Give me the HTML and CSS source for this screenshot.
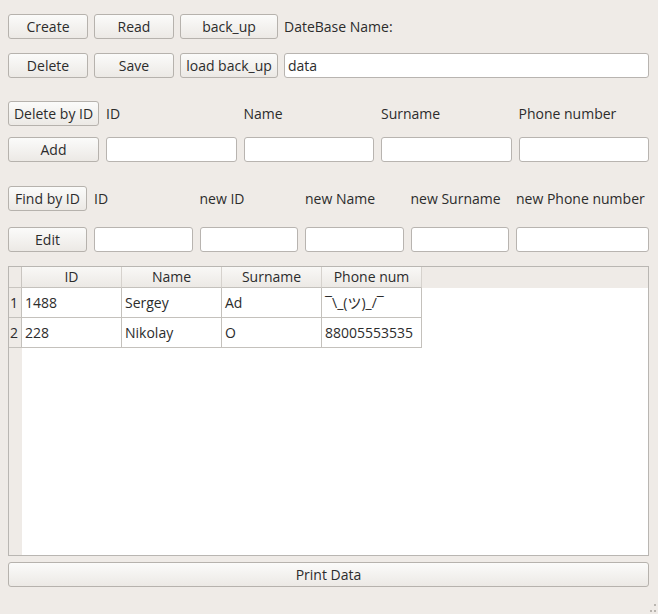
FILE: index.html
```html
<!DOCTYPE html>
<html>
<head>
<meta charset="utf-8">
<link rel="stylesheet" href="styles.css">
</head>
<body>
<div class="window">
  <div class="grid grid-db">
    <button class="btn">Create</button>
    <button class="btn">Read</button>
    <button class="btn">back_up</button>
    <span class="label">DateBase Name:</span>
    <button class="btn">Delete</button>
    <button class="btn">Save</button>
    <button class="btn">load back_up</button>
    <input class="field" type="text" value="data">
  </div>

  <div class="grid grid-add">
    <button class="btn">Delete by ID</button>
    <span class="label">ID</span>
    <span class="label">Name</span>
    <span class="label">Surname</span>
    <span class="label">Phone number</span>
    <button class="btn">Add</button>
    <input class="field" type="text">
    <input class="field" type="text">
    <input class="field" type="text">
    <input class="field" type="text">
  </div>

  <div class="grid grid-edit">
    <button class="btn">Find by ID</button>
    <span class="label">ID</span>
    <span class="label">new ID</span>
    <span class="label">new Name</span>
    <span class="label">new Surname</span>
    <span class="label">new Phone number</span>
    <button class="btn">Edit</button>
    <input class="field" type="text">
    <input class="field" type="text">
    <input class="field" type="text">
    <input class="field" type="text">
    <input class="field" type="text">
  </div>

  <div class="table">
    <div class="corner"></div>
    <div class="hcell">ID</div>
    <div class="hcell">Name</div>
    <div class="hcell">Surname</div>
    <div class="hcell">Phone num</div>
    <div class="hfill"></div>

    <div class="vcell">1</div>
    <div class="cell">1488</div>
    <div class="cell">Sergey</div>
    <div class="cell">Ad</div>
    <div class="cell">¯\_(ツ)_/¯</div>
    <div class="blank"></div>

    <div class="vcell">2</div>
    <div class="cell">228</div>
    <div class="cell">Nikolay</div>
    <div class="cell">O</div>
    <div class="cell">88005553535</div>
    <div class="blank"></div>

    <div class="vfill"></div>
    <div class="rest"></div>
  </div>

  <button class="btn print">Print Data</button>
  <div class="grip">
    <span></span><span></span><span></span>
  </div>
</div>
</body>
</html>
```

FILE: styles.css
```css
html, body {
  margin: 0;
  padding: 0;
  background: #efebe7;
}

body {
  font-family: "Open Sans", "Noto Sans", "Noto Sans CJK JP", sans-serif;
  font-size: 14px;
  color: #2c2c2c;
}

.window {
  position: relative;
  width: 658px;
  height: 614px;
  box-sizing: border-box;
  padding: 14px 9px 0 8px;
}

.grid {
  display: grid;
  grid-auto-rows: 25px;
}

.grid-db {
  grid-template-columns: 80px 80px 98px 1fr;
  column-gap: 6px;
  row-gap: 14px;
}

.grid-add {
  margin-top: 23px;
  grid-template-columns: 91px repeat(4, 1fr);
  column-gap: 7px;
  row-gap: 11px;
}

.grid-edit {
  margin-top: 24px;
  grid-template-columns: 79px repeat(4, 1fr) 133px;
  column-gap: 7px;
  row-gap: 16px;
}

.btn {
  font: inherit;
  color: #2c2c2c;
  margin: 0;
  padding: 0;
  height: 25px;
  border: 1px solid #b6b2ad;
  border-radius: 3px;
  background: linear-gradient(#fbfbfa, #ece9e5);
  white-space: nowrap;
  overflow: visible;
  text-align: center;
}

.label {
  line-height: 25px;
  white-space: nowrap;
}

.field {
  font: inherit;
  color: #2c2c2c;
  margin: 0;
  height: 25px;
  box-sizing: border-box;
  min-width: 0;
  width: 100%;
  padding: 0 3px;
  border: 1px solid #b8b4b0;
  border-radius: 3px;
  background: #ffffff;
  outline: none;
}

.table {
  margin-top: 14px;
  height: 290px;
  box-sizing: border-box;
  border: 1px solid #b9b6b2;
  background: #ffffff;
  display: grid;
  grid-template-columns: 13px repeat(4, 100px) 1fr;
  grid-template-rows: 21px 30px 30px 1fr;
}

.corner {
  background: #efebe7;
  border-right: 1px solid #c9c5c0;
  border-bottom: 1px solid #c9c5c0;
}

.hcell {
  background: linear-gradient(#f9f8f6, #ece9e5);
  border-right: 1px solid #d6d2cd;
  border-bottom: 1px solid #c4c1bc;
  text-align: center;
  line-height: 20px;
  white-space: nowrap;
  overflow: hidden;
}

.hfill {
  background: #efebe7;
}

.vcell {
  background: #efebe7;
  border-right: 1px solid #c4c1bc;
  border-bottom: 1px solid #c4c1bc;
  line-height: 29px;
  padding-left: 1px;
  white-space: nowrap;
}

.cell {
  border-right: 1px solid #c4c1bc;
  border-bottom: 1px solid #c4c1bc;
  line-height: 29px;
  padding-left: 3px;
  white-space: nowrap;
  overflow: hidden;
}

.blank {
  background: #ffffff;
}

.vfill {
  background: #efebe7;
}

.rest {
  grid-column: 2 / 7;
  background: #ffffff;
}

.print {
  display: block;
  width: 100%;
  margin-top: 6px;
}

.grip {
  position: absolute;
  right: 2px;
  bottom: 2px;
  width: 8px;
  height: 8px;
}

.grip span {
  position: absolute;
  width: 2px;
  height: 2px;
  background: #b9b5b0;
}

.grip span:nth-child(1) { right: 0; top: 0; }
.grip span:nth-child(2) { right: 0; bottom: 0; }
.grip span:nth-child(3) { right: 4px; bottom: 0; }
```
